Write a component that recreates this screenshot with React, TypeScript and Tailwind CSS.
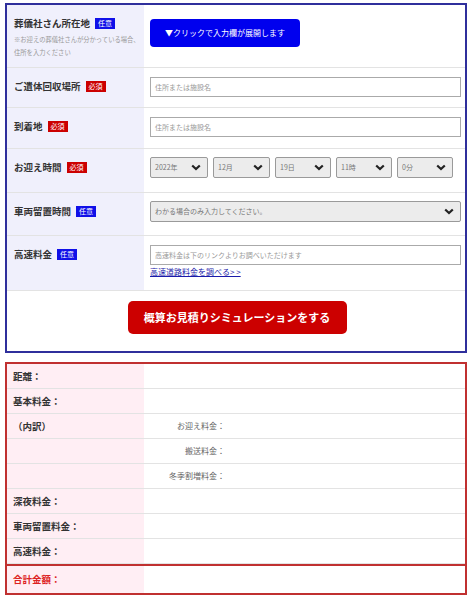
import React from "react"

const font = { fontFamily: '"Noto Sans CJK JP", "Noto Sans", sans-serif' }

function Badge({ type }: { type: "任意" | "必須" }) {
  return (
    <span
      className={
        "ml-[5px] inline-block px-[3px] text-[7px] leading-[11px] font-normal text-white " +
        (type === "任意" ? "bg-[#1010e8]" : "bg-[#cc0000]")
      }
    >
      {type}
    </span>
  )
}

function Chevron() {
  return (
    <svg width="10" height="7" viewBox="0 0 10 7" className="shrink-0">
      <path d="M1.2 1.5l3.8 3.6 3.8-3.6" fill="none" stroke="#222" strokeWidth="2.2" />
    </svg>
  )
}

function Select({ label, className }: { label: string; className: string }) {
  return (
    <div
      className={
        "flex h-[21px] items-center justify-between rounded-[2px] border border-[#9a9a9a] bg-[#ececec] pl-[4px] pr-[6px] text-[7px] text-[#777] " +
        className
      }
    >
      <span>{label}</span>
      <Chevron />
    </div>
  )
}

function FormRow({
  label,
  badge,
  h,
  children,
  note,
}: {
  label: string
  badge: "任意" | "必須"
  h: string
  children: React.ReactNode
  note?: boolean
}) {
  return (
    <div className={"flex border-b border-[#e3e3e3] " + h}>
      <div className="w-[137px] shrink-0 bg-[#f0f0fc] pl-[7px] pt-[12px]">
        <div className="flex items-center text-[9.5px] font-bold leading-[13px] text-[#333]">
          {label}
          <Badge type={badge} />
        </div>
        {note && (
          <div className="mt-[3px] text-[6.3px] leading-[13px] text-[#999]">
            ※お迎えの葬儀社さんが分かっている場合、
            <br />
            住所を入力ください
          </div>
        )}
      </div>
      <div className="flex-1 pl-[6px] pr-[4px]">{children}</div>
    </div>
  )
}

function Input({ text }: { text: string }) {
  return (
    <div className="flex h-[20px] items-center border border-[#aaa] bg-white pl-[4px] text-[7px] text-[#999]">
      {text}
    </div>
  )
}

function ResultRow({
  label,
  sub,
  total,
}: {
  label?: string
  sub?: string
  total?: boolean
}) {
  return (
    <div
      className={
        "flex " +
        (total ? "h-[29px] border-t-2 border-[#c03030]" : "h-[25px] border-b border-[#e3e3e3]")
      }
    >
      <div
        className={
          "flex w-[137px] shrink-0 items-center bg-[#ffeef4] pl-[6px] text-[9.5px] font-bold " +
          (total ? "text-[#dd2222]" : "text-[#333]")
        }
      >
        {label}
      </div>
      <div className="flex flex-1 items-center">
        {sub && (
          <div className="w-[81px] text-right text-[8px] text-[#666]">{sub}</div>
        )}
      </div>
    </div>
  )
}

export default function App() {
  return (
    <div style={font} className="w-[472px] bg-white pt-[3px] pb-[6px]">
      <div className="mx-[5px] border-2 border-[#2f2f9c]">
        <FormRow label="葬儀社さん所在地" badge="任意" h="h-[63px]" note>
          <div className="pt-[14px]">
            <div className="flex h-[28px] w-[150px] items-center justify-center rounded-[4px] bg-[#0000ee] text-[8px] text-white">
              ▼クリックで入力欄が展開します
            </div>
          </div>
        </FormRow>
        <FormRow label="ご遺体回収場所" badge="必須" h="h-[40px]">
          <div className="pt-[9px]">
            <Input text="住所または施設名" />
          </div>
        </FormRow>
        <FormRow label="到着地" badge="必須" h="h-[41px]">
          <div className="pt-[9px]">
            <Input text="住所または施設名" />
          </div>
        </FormRow>
        <FormRow label="お迎え時間" badge="必須" h="h-[44px]">
          <div className="flex gap-[5px] pt-[8px]">
            <Select label="2022年" className="w-[58px]" />
            <Select label="12月" className="w-[57px]" />
            <Select label="19日" className="w-[56px]" />
            <Select label="11時" className="w-[56px]" />
            <Select label="0分" className="w-[56px]" />
          </div>
        </FormRow>
        <FormRow label="車両留置時間" badge="任意" h="h-[43px]">
          <div className="pt-[8px]">
            <Select label="わかる場合のみ入力してください。" className="w-full" />
          </div>
        </FormRow>
        <FormRow label="高速料金" badge="任意" h="h-[55px]">
          <div className="pt-[9px]">
            <Input text="高速料金は下のリンクよりお調べいただけます" />
            <a className="mt-[1px] block text-[8px] leading-[11px] text-[#1a1aaa] underline">
              高速道路料金を調べる&gt; &gt;
            </a>
          </div>
        </FormRow>
        <div className="flex h-[60px] items-start justify-center pt-[10px]">
          <div className="ml-[2px] flex h-[33px] w-[219px] items-center justify-center rounded-[5px] bg-[#cc0000] text-[11px] font-bold text-white">
            概算お見積りシミュレーションをする
          </div>
        </div>
      </div>

      <div className="mx-[5px] mt-[9px] border-2 border-[#c03030]">
        <ResultRow label="距離：" />
        <ResultRow label="基本料金：" />
        <ResultRow label="（内訳）" sub="お迎え料金：" />
        <ResultRow sub="搬送料金：" />
        <ResultRow sub="冬季割増料金：" />
        <ResultRow label="深夜料金：" />
        <ResultRow label="車両留置料金：" />
        <ResultRow label="高速料金：" />
        <ResultRow label="合計金額：" total />
      </div>
    </div>
  )
}
